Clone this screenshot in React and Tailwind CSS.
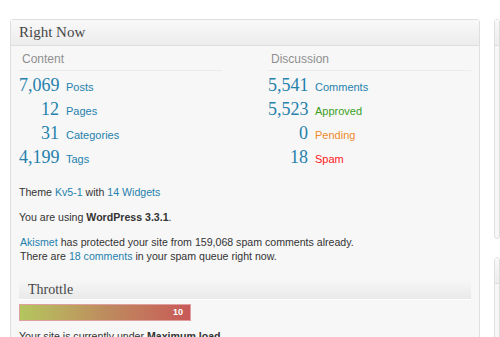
import React from 'react'

const serif = { fontFamily: '"Liberation Serif", Georgia, serif' }

function Row({ num, label, color, numW }) {
  return (
    <div className="flex items-baseline h-[24px]">
      <span className={`${numW} text-right text-[18px] leading-[24px] text-[#2581ad]`} style={serif}>{num}</span>
      <span className={`ml-[7px] text-[11px] ${color}`}>{label}</span>
    </div>
  )
}

export default function App() {
  return (
    <div className="w-[500px] h-[337px] overflow-hidden bg-white font-['Liberation_Sans',Arial,sans-serif] text-[#333]">
      <div className="flex pt-[19px] pl-[10px] gap-[14px]">
        {/* Right Now box */}
        <div className="w-[470px] shrink-0 h-[330px] border border-[#dfdfdf] rounded-[3px] bg-[#f7f7f7]">
          <div className="h-[26px] bg-gradient-to-b from-[#f9f9f9] to-[#ececec] border-b border-[#dfdfdf] pl-[8px] flex items-center">
            <h3 className="text-[15px] text-[#464646]" style={serif}>Right Now</h3>
          </div>
          <div className="px-[8px]">
            <div className="flex justify-between">
              <div className="w-[203px]">
                <p className="pt-[4px] pl-[3px] h-[25px] text-[12px] text-[#8f8f8f] border-b border-[#ececec]">Content</p>
                <div className="pt-[2px]">
                  <Row num="7,069" label="Posts" color="text-[#2581ad]" numW="w-[40px]" />
                  <Row num="12" label="Pages" color="text-[#2581ad]" numW="w-[40px]" />
                  <Row num="31" label="Categories" color="text-[#2581ad]" numW="w-[40px]" />
                  <Row num="4,199" label="Tags" color="text-[#2581ad]" numW="w-[40px]" />
                </div>
              </div>
              <div className="w-[203px]">
                <p className="pt-[4px] pl-[3px] h-[25px] text-[12px] text-[#8f8f8f] border-b border-[#ececec]">Discussion</p>
                <div className="pt-[2px]">
                  <Row num="5,541" label="Comments" color="text-[#2581ad]" numW="w-[40px]" />
                  <Row num="5,523" label="Approved" color="text-[#3a9e1c]" numW="w-[40px]" />
                  <Row num="0" label="Pending" color="text-[#ee8a2a]" numW="w-[40px]" />
                  <Row num="18" label="Spam" color="text-[#ff2020]" numW="w-[40px]" />
                </div>
              </div>
            </div>

            <div className="text-[10.6px] leading-[14px] text-[#333]">
              <p className="mt-[16px]">Theme <span className="text-[#2581ad] font-medium">Kv5-1</span> with <span className="text-[#2581ad] font-medium">14 Widgets</span></p>
              <p className="mt-[11px]">You are using <b>WordPress 3.3.1</b>.</p>
              <p className="mt-[11px] pl-[1px]"><span className="text-[#2581ad]">Akismet</span> has protected your site from 159,068 spam comments already.<br />There are <span className="text-[#2581ad]">18 comments</span> in your spam queue right now.</p>
            </div>

            <div className="mt-[16px] h-[21px] bg-gradient-to-b from-[#f7f7f7] to-[#e9e9e9] border-b border-white pl-[9px] flex items-center">
              <span className="text-[14px] text-[#464646]" style={serif}>Throttle</span>
            </div>
            <div className="mt-[4px] w-[172px] h-[17px] bg-gradient-to-r from-[#b3c65d] via-[#bd8c5e] to-[#c85858] border border-[#e0a0a0] flex items-center justify-end pr-[7px]">
              <span className="text-[9px] font-bold text-white">10</span>
            </div>
            <p className="mt-[8px] text-[10.6px] text-[#333]">Your site is currently under <b>Maximum load</b>.</p>
          </div>
        </div>

        {/* Side column */}
        <div className="flex-1 flex flex-col gap-[18px]">
          <div className="h-[220px] border border-[#dfdfdf] rounded-[3px] bg-[#f7f7f7]">
            <div className="h-[26px] bg-gradient-to-b from-[#f9f9f9] to-[#ececec] border-b border-[#dfdfdf]" />
          </div>
          <div className="h-[100px] border border-[#dfdfdf] rounded-[3px] bg-[#f7f7f7]">
            <div className="h-[26px] bg-gradient-to-b from-[#f9f9f9] to-[#ececec] border-b border-[#dfdfdf]" />
          </div>
        </div>
      </div>
    </div>
  )
}
